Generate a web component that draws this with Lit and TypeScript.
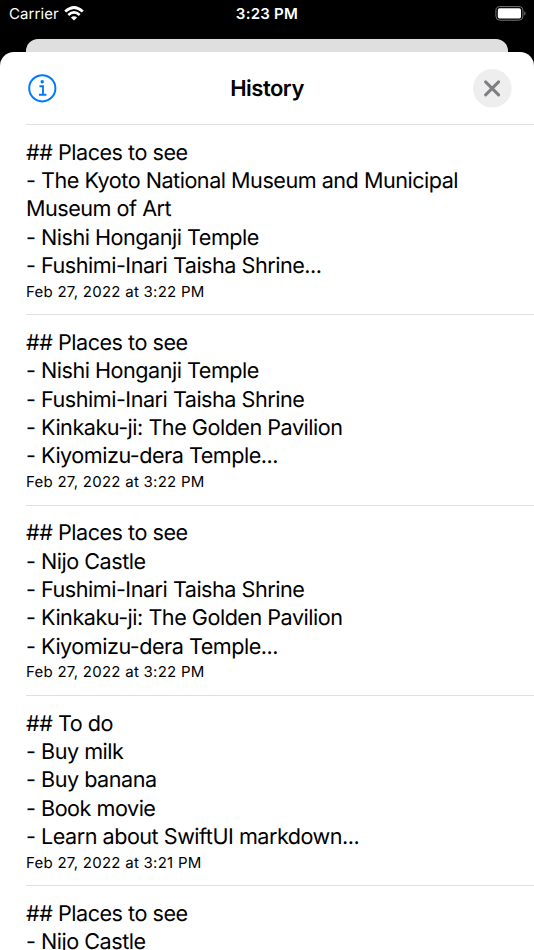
import { LitElement, html, css } from "lit";
import { customElement } from "lit/decorators.js";

interface Entry { lines: string[]; date: string; }

const entries: Entry[] = [
  { lines: ["## Places to see", "- The Kyoto National Museum and Municipal", "Museum of Art", "- Nishi Honganji Temple", "- Fushimi-Inari Taisha Shrine..."], date: "Feb 27, 2022 at 3:22 PM" },
  { lines: ["## Places to see", "- Nishi Honganji Temple", "- Fushimi-Inari Taisha Shrine", "- Kinkaku-ji: The Golden Pavilion", "- Kiyomizu-dera Temple..."], date: "Feb 27, 2022 at 3:22 PM" },
  { lines: ["## Places to see", "- Nijo Castle", "- Fushimi-Inari Taisha Shrine", "- Kinkaku-ji: The Golden Pavilion", "- Kiyomizu-dera Temple..."], date: "Feb 27, 2022 at 3:22 PM" },
  { lines: ["## To do", "- Buy milk", "- Buy banana", "- Book movie", "- Learn about SwiftUI markdown..."], date: "Feb 27, 2022 at 3:21 PM" },
  { lines: ["## Places to see", "- Nijo Castle"], date: "" },
];

@customElement("app-root")
export class AppRoot extends LitElement {
  static styles = css`
    :host { display: flex; flex-direction: column; width: 534px; height: 950px; overflow: hidden; background: #000; font-family: Inter, "Liberation Sans", sans-serif; color: #000; text-rendering: geometricPrecision; }
    .status { height: 39px; flex: none; display: grid; grid-template-columns: 1fr auto 1fr; color: #fff; font-size: 15px; line-height: 28px; padding: 0 7px 0 9px; box-sizing: border-box; align-items: start; }
    .carrier { display: flex; gap: 5px; align-items: center; height: 28px; letter-spacing: 0.1px; }
    .carrier svg { margin-top: -2px; }
    .time { font-weight: 600; letter-spacing: 0.25px; margin-left: -2px; }
    .battery { justify-self: end; margin-top: 6px; display: block; }
    .behind { height: 13px; flex: none; margin: 0 26px; background: #dfdfdf; border-radius: 12px 12px 0 0; }
    .sheet { flex: 1; min-height: 0; background: #fff; border-radius: 14px 14px 0 0; overflow: hidden; }
    .header { height: 72px; display: grid; grid-template-columns: 1fr auto 1fr; align-items: center; padding: 0 22px 0 28px; }
    .title { font-size: 22px; font-weight: 600; margin: 2px 6px 0 0; letter-spacing: -0.5px; }
    .close { justify-self: end; }
    .header svg { display: block; }
    .entry { margin-left: 26px; height: 190.35px; box-sizing: border-box; border-top: 1px solid #e0e0e1; padding-top: 13.5px; }
    .line { font-size: 21.6px; line-height: 28.4px; letter-spacing: -0.49px; white-space: pre; }
    .date { font-size: 15px; line-height: 21px; letter-spacing: 0.26px; white-space: pre; }
  `;
  render() {
    return html`
      <div class="status">
        <div class="carrier"><span>Carrier</span>
          <svg width="20" height="15" viewBox="0 0 20 15" fill="none" stroke="#fff" stroke-width="2.7"><path d="M1.2 5.6Q10-2.6 18.8 5.6M4.3 9Q10 3.8 15.7 9"/><path d="M10 14.6L6.9 11.4Q10 8.9 13.1 11.4Z" fill="#fff" stroke="none"/></svg>
        </div>
        <div class="time">3:23 PM</div>
        <svg class="battery" width="32" height="15" viewBox="0 0 32 15"><rect x=".9" y=".6" width="27" height="13.6" rx="4" fill="none" stroke="#777"/><rect x="2.8" y="2.3" width="23.2" height="10.2" rx="1.8" fill="#fff"/><path d="M29.3 5q2.6 2.4 0 4.8z" fill="#777"/></svg>
      </div>
      <div class="behind"></div>
      <main class="sheet">
        <header class="header">
          <svg width="29" height="29" viewBox="0 0 29 29"><circle cx="14.3" cy="14.3" r="13.1" fill="none" stroke="#007aff" stroke-width="2"/><circle cx="14.2" cy="7.8" r="1.75" fill="#007aff"/><path d="M11.4 12.3H15V20.7M11 20.7H18.4" fill="none" stroke="#007aff" stroke-width="1.9"/></svg>
          <h1 class="title">History</h1>
          <svg class="close" width="39" height="39" viewBox="0 0 39 39"><circle cx="19.3" cy="19.3" r="19.3" fill="#eee"/><path d="M12.6 12.9L25.6 25.9M25.6 12.9L12.6 25.9" stroke="#7f7f83" stroke-width="3" stroke-linecap="round"/></svg>
        </header>
        ${entries.map((e) => html`<article class="entry">${e.lines.map((l) => html`<div class="line">${l}</div>`)}<div class="date">${e.date}</div></article>`)}
      </main>`;
  }
}
